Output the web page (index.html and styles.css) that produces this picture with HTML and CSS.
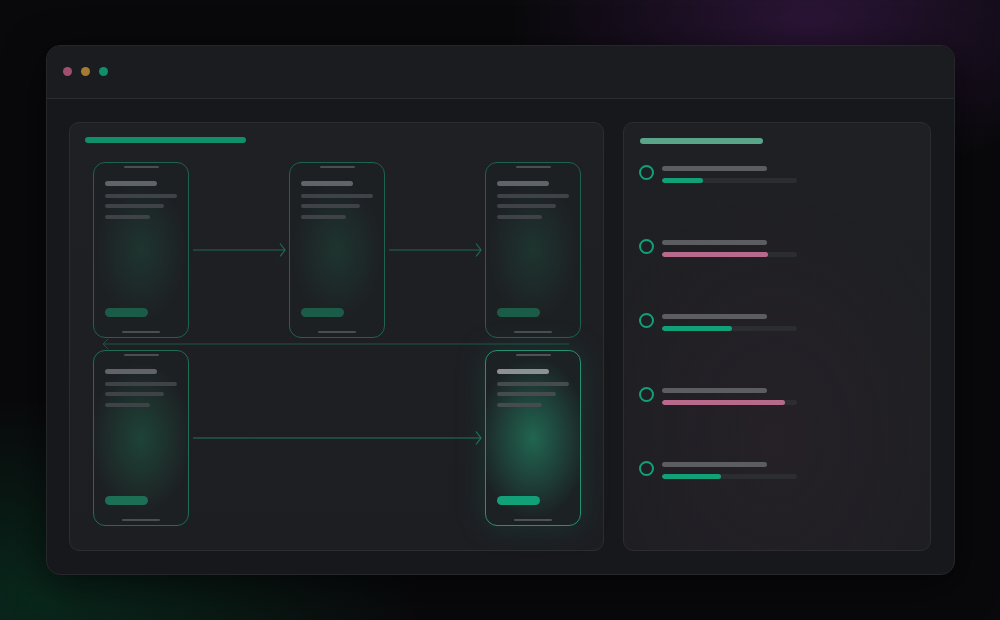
FILE: index.html
```html
<!DOCTYPE html>
<html>
<head>
<meta charset="utf-8">
<link rel="stylesheet" href="styles.css">
</head>
<body>
<div class="window">
  <div class="titlebar">
    <span class="dot dot-red"></span>
    <span class="dot dot-yellow"></span>
    <span class="dot dot-green"></span>
  </div>
  <div class="content">
    <div class="panel flow-panel">
      <div class="panel-head head-green"></div>
      <div class="flow">
        <div class="phone">
          <div class="notch"></div>
          <div class="ph-title"></div>
          <div class="ph-line l1"></div>
          <div class="ph-line l2"></div>
          <div class="ph-line l3"></div>
          <div class="ph-btn"></div>
          <div class="home"></div>
        </div>
        <div class="arrow"><svg width="100" height="20" viewBox="0 0 100 20"><path d="M4 10H96M91 3.5L96 10L91 16.5" fill="none" stroke="#1f6a52" stroke-width="1.2"/></svg></div>
        <div class="phone">
          <div class="notch"></div>
          <div class="ph-title"></div>
          <div class="ph-line l1"></div>
          <div class="ph-line l2"></div>
          <div class="ph-line l3"></div>
          <div class="ph-btn"></div>
          <div class="home"></div>
        </div>
        <div class="arrow"><svg width="100" height="20" viewBox="0 0 100 20"><path d="M4 10H96M91 3.5L96 10L91 16.5" fill="none" stroke="#1f6a52" stroke-width="1.2"/></svg></div>
        <div class="phone">
          <div class="notch"></div>
          <div class="ph-title"></div>
          <div class="ph-line l1"></div>
          <div class="ph-line l2"></div>
          <div class="ph-line l3"></div>
          <div class="ph-btn"></div>
          <div class="home"></div>
        </div>

        <div class="phone phone-mid">
          <div class="notch"></div>
          <div class="ph-title"></div>
          <div class="ph-line l1"></div>
          <div class="ph-line l2"></div>
          <div class="ph-line l3"></div>
          <div class="ph-btn"></div>
          <div class="home"></div>
        </div>
        <div class="arrow arrow-long"><svg width="296" height="20" viewBox="0 0 296 20"><path d="M4 10H292M287 3.5L292 10L287 16.5" fill="none" stroke="#22765a" stroke-width="1.2"/></svg></div>
        <div class="phone phone-active">
          <div class="notch"></div>
          <div class="ph-title"></div>
          <div class="ph-line l1"></div>
          <div class="ph-line l2"></div>
          <div class="ph-line l3"></div>
          <div class="ph-btn"></div>
          <div class="home"></div>
        </div>

        <svg class="return" width="480" height="12" viewBox="0 0 480 12"><path d="M4 6H470M9 1L4 6L9 11" fill="none" stroke="#1c5646" stroke-width="1"/></svg>
      </div>
    </div>

    <div class="panel list-panel">
      <div class="panel-head head-mint"></div>
      <div class="items">
        <div class="item">
          <span class="ring"></span>
          <div class="bars">
            <div class="label"></div>
            <div class="track"><div class="fill green" style="width:41px"></div></div>
          </div>
        </div>
        <div class="item">
          <span class="ring"></span>
          <div class="bars">
            <div class="label"></div>
            <div class="track"><div class="fill pink" style="width:106px"></div></div>
          </div>
        </div>
        <div class="item">
          <span class="ring"></span>
          <div class="bars">
            <div class="label"></div>
            <div class="track"><div class="fill green" style="width:70px"></div></div>
          </div>
        </div>
        <div class="item">
          <span class="ring"></span>
          <div class="bars">
            <div class="label"></div>
            <div class="track"><div class="fill pink" style="width:123px"></div></div>
          </div>
        </div>
        <div class="item">
          <span class="ring"></span>
          <div class="bars">
            <div class="label"></div>
            <div class="track"><div class="fill green" style="width:59px"></div></div>
          </div>
        </div>
      </div>
    </div>
  </div>
</div>
</body>
</html>
```
FILE: styles.css
```css
html, body {
  margin: 0;
  height: 100%;
}
body {
  width: 1000px;
  height: 620px;
  box-sizing: border-box;
  padding: 45px 0 0 46px;
  overflow: hidden;
  font-family: "Liberation Sans", sans-serif;
  background:
    radial-gradient(ellipse 300px 160px at 810px 20px, rgba(70, 30, 90, 0.55), rgba(70, 30, 90, 0) 100%),
    radial-gradient(ellipse 380px 200px at 40px 600px, rgba(10, 70, 45, 0.5), rgba(10, 70, 45, 0) 100%),
    #09090b;
}
.window {
  width: 909px;
  height: 530px;
  box-sizing: border-box;
  border: 1px solid #26272b;
  border-radius: 14px;
  background: #17181b;
  display: flex;
  flex-direction: column;
  overflow: hidden;
  box-shadow: 0 10px 40px rgba(0,0,0,0.6);
}
.titlebar {
  height: 53px;
  flex: none;
  box-sizing: border-box;
  border-bottom: 1px solid #2a2c2f;
  background: #1b1c1f;
  display: flex;
  align-items: center;
  gap: 9px;
  padding-left: 16px;
  padding-bottom: 1px;
}
.dot {
  width: 9px;
  height: 9px;
  border-radius: 50%;
}
.dot-red { background: #a0506e; }
.dot-yellow { background: #a47b33; }
.dot-green { background: #0f8f6a; }

.content {
  flex: 1;
  display: flex;
  gap: 19px;
  padding: 23px 23px 23px 22px;
  min-height: 0;
}
.panel {
  box-sizing: border-box;
  border: 1px solid #2b2d31;
  border-radius: 10px;
  background: linear-gradient(180deg, #1f2024 0%, #1d1e22 100%);
}
.flow-panel {
  width: 536px;
  padding: 14px 0 0 15px;
}
.list-panel {
  width: 309px;
  padding: 15px 0 0 16px;
  background:
    radial-gradient(ellipse 200px 260px at 150px 320px, rgba(60, 40, 50, 0.25), rgba(60,40,50,0) 100%),
    linear-gradient(180deg, #1f2024 0%, #1d1e22 100%);
}
.panel-head {
  height: 6px;
  border-radius: 3px;
}
.head-green {
  width: 161px;
  background: #0f8f6a;
}
.head-mint {
  width: 123px;
  background: #5aa58a;
}

.flow {
  position: relative;
  margin: 19px 0 0 8px;
  display: grid;
  grid-template-columns: 96px 100px 96px 100px 96px;
  grid-template-rows: 176px 176px;
  row-gap: 12px;
}
.phone {
  position: relative;
  box-sizing: border-box;
  border: 1px solid #1e634d;
  border-radius: 12px;
  background:
    radial-gradient(ellipse 45px 70px at 50% 50%, rgba(30, 90, 70, 0.35), rgba(30, 90, 70, 0) 100%),
    #1d2023;
  padding: 3px 0 0 11px;
  display: flex;
  flex-direction: column;
}
.notch {
  align-self: center;
  width: 35px;
  height: 2px;
  border-radius: 1px;
  background: #4a4d51;
  margin-left: -11px;
}
.ph-title {
  width: 52px;
  height: 5px;
  border-radius: 3px;
  background: #606367;
  margin-top: 13px;
}
.ph-line {
  height: 4px;
  border-radius: 2px;
  background: #3f4247;
}
.l1 { width: 72px; margin-top: 8px; }
.l2 { width: 59px; margin-top: 6px; }
.l3 { width: 45px; margin-top: 7px; }
.ph-btn {
  width: 43px;
  height: 9px;
  border-radius: 5px;
  background: #1b5c48;
  margin-top: 89px;
}
.home {
  align-self: center;
  margin-left: -11px;
  width: 38px;
  height: 2px;
  border-radius: 1px;
  background: #4a4d51;
  margin-top: 14px;
}
.phone-mid {
  border-color: #1f6e54;
  background:
    radial-gradient(ellipse 50px 75px at 50% 50%, rgba(30, 110, 80, 0.45), rgba(30, 110, 80, 0) 100%),
    #1d2023;
}
.phone-mid .ph-btn { background: #1c6e54; }
.phone-active {
  border-color: #27906e;
  background:
    radial-gradient(ellipse 55px 80px at 50% 50%, rgba(35, 130, 100, 0.7), rgba(35, 130, 100, 0) 100%),
    #1c2224;
  box-shadow: 0 0 30px rgba(20, 120, 90, 0.25);
}
.phone-active .ph-title { background: #8e9193; }
.phone-active .ph-line { background: #464b4e; }
.phone-active .ph-btn { background: #12a078; }
.phone-active .notch, .phone-active .home { background: #4f5255; }

.arrow {
  display: flex;
  align-items: center;
  justify-content: center;
}
.arrow svg { display: block; }
.arrow-long {
  grid-column: 2 / 5;
}
.return {
  position: absolute;
  left: 6px;
  top: 176px;
  display: block;
}

.items {
  margin-top: 20px;
  display: flex;
  flex-direction: column;
  gap: 55px;
}
.item {
  display: flex;
  align-items: flex-start;
  gap: 8px;
  margin-left: -1px;
}
.ring {
  width: 15px;
  height: 15px;
  box-sizing: border-box;
  border: 2px solid #12a078;
  border-radius: 50%;
  margin-top: 1px;
  flex: none;
}
.bars {
  display: flex;
  flex-direction: column;
  gap: 7px;
  padding-top: 2px;
}
.label {
  width: 105px;
  height: 5px;
  border-radius: 3px;
  background: #5b5d61;
}
.track {
  width: 135px;
  height: 5px;
  border-radius: 3px;
  background: #2b2d31;
  overflow: hidden;
}
.fill {
  height: 100%;
  border-radius: 3px;
}
.fill.green { background: #12a078; }
.fill.pink { background: #b86a8c; }
```
